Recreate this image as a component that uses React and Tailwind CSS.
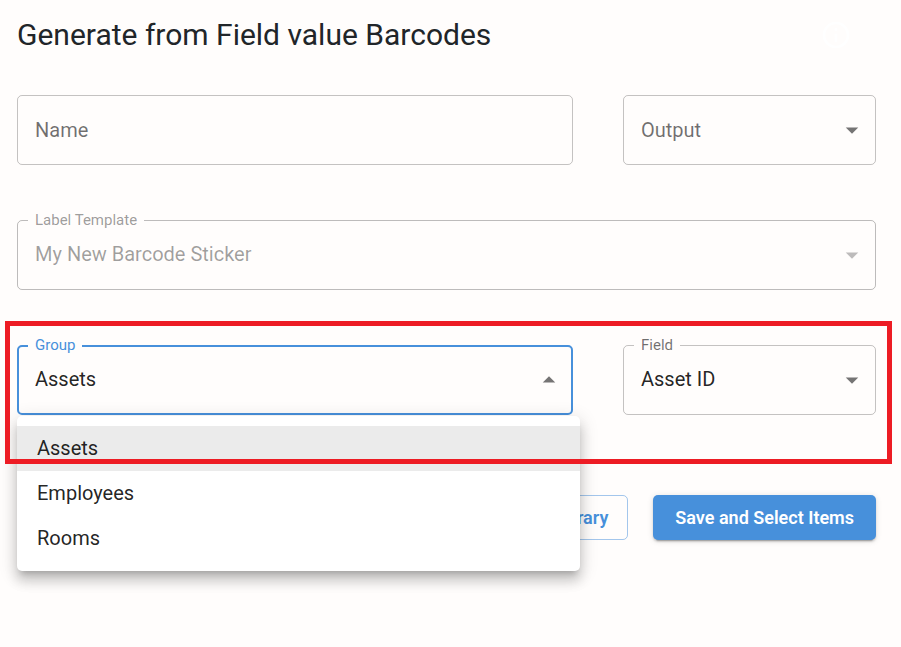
import { useState } from "react";
import clsx from "clsx";

const outputs = ["PDF", "CSV"];
const groups = ["Assets", "Employees", "Rooms"];
const fields = ["Asset ID", "Name", "Serial Number"];

// Outlined box with a label that sits on the border once there is a value
const OutlinedField = ({ id, label, filled, active, disabled, className, children }) => (
  <div className={clsx("relative h-[70px]", className)}>
    {children}
    <label
      htmlFor={id}
      className={clsx(
        "pointer-events-none absolute",
        filled ? "-top-2.5 left-[11px] bg-[#fffdfc] px-[7px] text-[15px] leading-5" : "inset-y-0 left-[18px] flex items-center text-xl",
        active ? "text-[#4790db]" : disabled ? "text-black/40" : "text-black/56"
      )}
    >
      {label}
    </label>
  </div>
);

const Arrow = ({ up, disabled }) => (
  <svg
    viewBox="0 0 24 24"
    className={clsx(
      "pointer-events-none absolute top-5 right-[9px] size-[30px]",
      up && "rotate-180",
      disabled ? "fill-black/26" : "fill-black/54"
    )}
  >
    <path d="M7 10l5 5 5-5z" />
  </svg>
);

const selectBase =
  "h-full w-full appearance-none rounded-[5px] bg-transparent pr-10 pb-0.5 text-xl outline-none";

const App = () => {
  const [name, setName] = useState("");
  const [output, setOutput] = useState("");
  const [group, setGroup] = useState("Assets");
  const [field, setField] = useState("Asset ID");
  const [open, setOpen] = useState(true);

  const handleGroup = (item) => {
    setGroup(item);
    setOpen(false);
  };

  return (
    <main className="min-h-screen bg-[#fffdfc] pt-3 pr-[25px] pb-10 pl-[17px] font-['Roboto',sans-serif] text-black/87">
      <header className="flex items-center justify-between">
        <h1 className="text-3xl leading-[45px] text-[#212529]">Generate from Field value Barcodes</h1>
        <button type="button" aria-label="Info" className="mr-6 text-white">
          <svg viewBox="0 0 24 24" className="size-8 fill-current">
            <path d="M11 7h2v2h-2zm0 4h2v6h-2zm1-9C6.48 2 2 6.48 2 12s4.48 10 10 10 10-4.48 10-10S17.52 2 12 2zm0 18c-4.41 0-8-3.59-8-8s3.59-8 8-8 8 3.59 8 8-3.59 8-8 8z" />
          </svg>
        </button>
      </header>

      <form className="mt-[38px]" onSubmit={(e) => e.preventDefault()}>
        <div className="grid grid-cols-3 gap-x-[50px]">
          <OutlinedField id="name" label="Name" filled={name !== ""} className="col-span-2">
            <input
              id="name"
              type="text"
              value={name}
              onChange={(e) => setName(e.target.value)}
              className="h-full w-full rounded-[5px] border border-black/23 bg-transparent px-[17px] text-xl outline-none"
            />
          </OutlinedField>
          <OutlinedField id="output" label="Output" filled={output !== ""}>
            <select
              id="output"
              value={output}
              onChange={(e) => setOutput(e.target.value)}
              className={clsx(selectBase, "border border-black/23 pl-[17px]")}
            >
              <option value=""></option>
              {outputs.map((item) => (
                <option key={item}>{item}</option>
              ))}
            </select>
            <Arrow />
          </OutlinedField>
        </div>

        <OutlinedField id="template" label="Label Template" filled disabled className="mt-[55px]">
          <select
            id="template"
            disabled
            className={clsx(selectBase, "border border-black/26 pl-[17px] text-black/38 opacity-100")}
          >
            <option>My New Barcode Sticker</option>
          </select>
          <Arrow disabled />
        </OutlinedField>

        <div className="relative mt-[55px] grid grid-cols-3 gap-x-[50px]">
          <OutlinedField id="group" label="Group" filled active={open} className="col-span-2">
            <select
              id="group"
              value={group}
              onMouseDown={(e) => {
                e.preventDefault();
                setOpen(!open);
              }}
              onChange={(e) => handleGroup(e.target.value)}
              className={clsx(selectBase, "border-2 border-[#4790db] pl-4")}
            >
              {groups.map((item) => (
                <option key={item}>{item}</option>
              ))}
            </select>
            <Arrow up={open} />
            {open && (
              <ul className="absolute top-[71px] left-0 z-10 w-[calc(100%+7px)] rounded-[5px] bg-white py-2.5 shadow-[0_6px_6px_-4px_rgba(0,0,0,0.2),0_10px_12px_1px_rgba(0,0,0,0.14),0_4px_18px_2px_rgba(0,0,0,0.12)]">
                {groups.map((item) => (
                  <li key={item}>
                    <button
                      type="button"
                      onClick={() => handleGroup(item)}
                      className={clsx(
                        "block h-[45px] w-full px-5 pb-0.5 text-left text-xl",
                        item === group && "bg-[#ebebeb]"
                      )}
                    >
                      {item}
                    </button>
                  </li>
                ))}
              </ul>
            )}
          </OutlinedField>
          <OutlinedField id="field" label="Field" filled>
            <select
              id="field"
              value={field}
              onChange={(e) => setField(e.target.value)}
              className={clsx(selectBase, "border border-black/23 pl-[17px]")}
            >
              {fields.map((item) => (
                <option key={item}>{item}</option>
              ))}
            </select>
            <Arrow />
          </OutlinedField>
          {/* highlight around group + field */}
          <div className="pointer-events-none absolute -top-6 -right-4 -bottom-[49px] -left-3 z-20 border-5 border-[#ed1c24]" />
        </div>

        <div className="mt-20 flex justify-end gap-[25px]">
          <button
            type="button"
            className="h-[45px] rounded-[5px] border border-[#4790db]/50 px-[19px] text-lg font-semibold text-[#4790db]"
          >
            Save to Library
          </button>
          <button
            type="submit"
            className="h-[45px] rounded-[5px] bg-[#4790db] px-[22px] text-lg font-semibold text-white shadow-[0_4px_1px_-3px_rgba(0,0,0,0.2),0_2px_2px_0_rgba(0,0,0,0.14),0_1px_6px_0_rgba(0,0,0,0.12)]"
          >
            Save and Select Items
          </button>
        </div>
      </form>
    </main>
  );
};

export default App;
